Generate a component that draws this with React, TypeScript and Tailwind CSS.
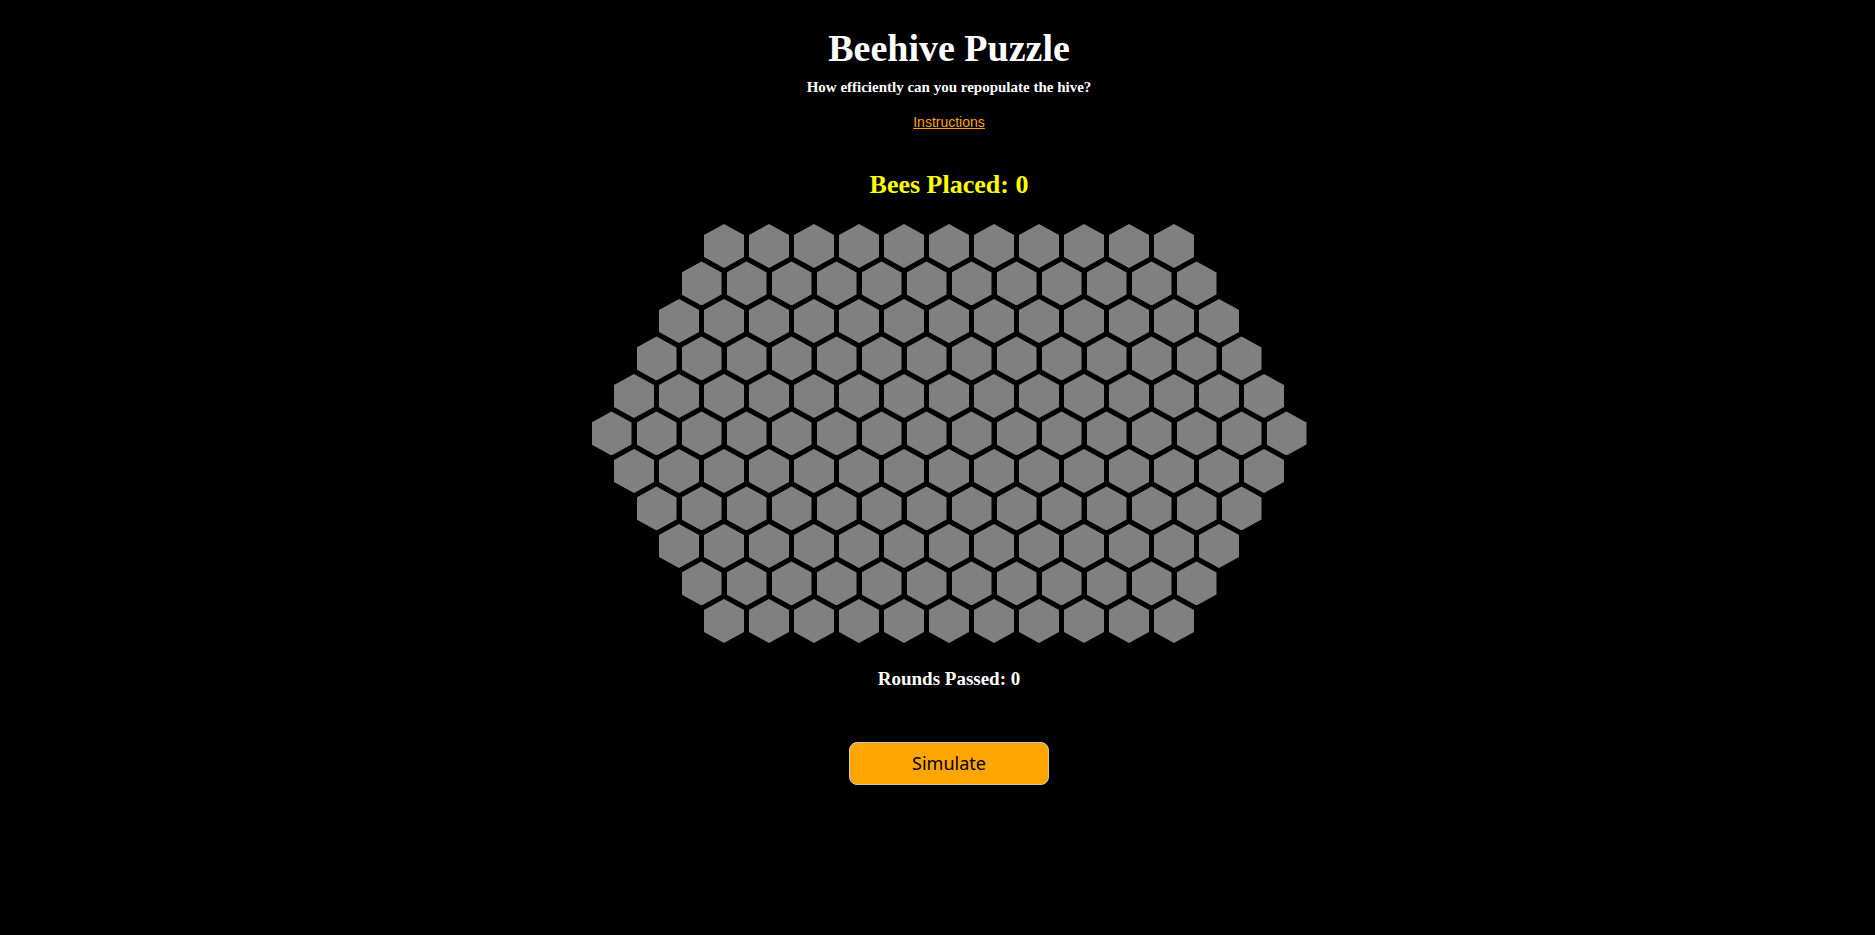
import { useState } from "react";

const rowSizes = [11, 12, 13, 14, 15, 16, 15, 14, 13, 12, 11];

export default function App() {
  const [bees, setBees] = useState<Record<string, boolean>>({});
  const [rounds, setRounds] = useState(0);

  const placed = Object.values(bees).filter(Boolean).length;

  function toggle(key: string) {
    setBees(b => ({ ...b, [key]: !b[key] }));
  }

  return (
    <div className="min-h-[935px] w-full bg-black pl-[23px] font-['Liberation_Serif',serif]">
      <div className="flex flex-col items-center">
        <h1 className="mt-[26px] h-[44px] text-[38px] leading-[44px] font-bold text-white">Beehive Puzzle</h1>
        <p className="mt-[8.7px] h-[17px] text-[15px] leading-[17px] font-bold text-white">How efficiently can you repopulate the hive?</p>
        <a href="#" className="mt-[18.1px] h-[16px] font-['Liberation_Sans',Arial,sans-serif] text-[14px] leading-[16px] text-[#ffa500] underline">Instructions</a>
        <h2 className="mt-[40.7px] h-[30px] text-[26px] leading-[30px] font-bold text-[#ffff00]">Bees Placed: {placed}</h2>

        <div className="mt-[23.5px] flex flex-col items-center">
          {rowSizes.map((n, r) => (
            <div key={r} className={r === 0 ? "flex gap-[5px]" : "-mt-[6.5px] flex gap-[5px]"}>
              {Array.from({ length: n }).map((_, c) => {
                const key = `${r}-${c}`;
                return (
                  <div
                    key={key}
                    onClick={() => toggle(key)}
                    className={`h-[44px] w-[40px] cursor-pointer [clip-path:polygon(50%_0,100%_25%,100%_75%,50%_100%,0_75%,0_25%)] ${bees[key] ? "bg-[#ffd700]" : "bg-[#808080]"}`}
                  />
                );
              })}
            </div>
          ))}
        </div>

        <h3 className="mt-[25.4px] h-[22px] text-[19px] leading-[22px] font-bold text-white">Rounds Passed: {rounds}</h3>

        <button
          onClick={() => setRounds(x => x + 1)}
          className="mt-[52px] h-[43px] w-[200px] rounded-[8px] border border-[#c8c8c8] bg-[#ffa500] font-['Noto_Sans',sans-serif] text-[18px] text-black"
        >
          Simulate
        </button>
      </div>
    </div>
  );
}
